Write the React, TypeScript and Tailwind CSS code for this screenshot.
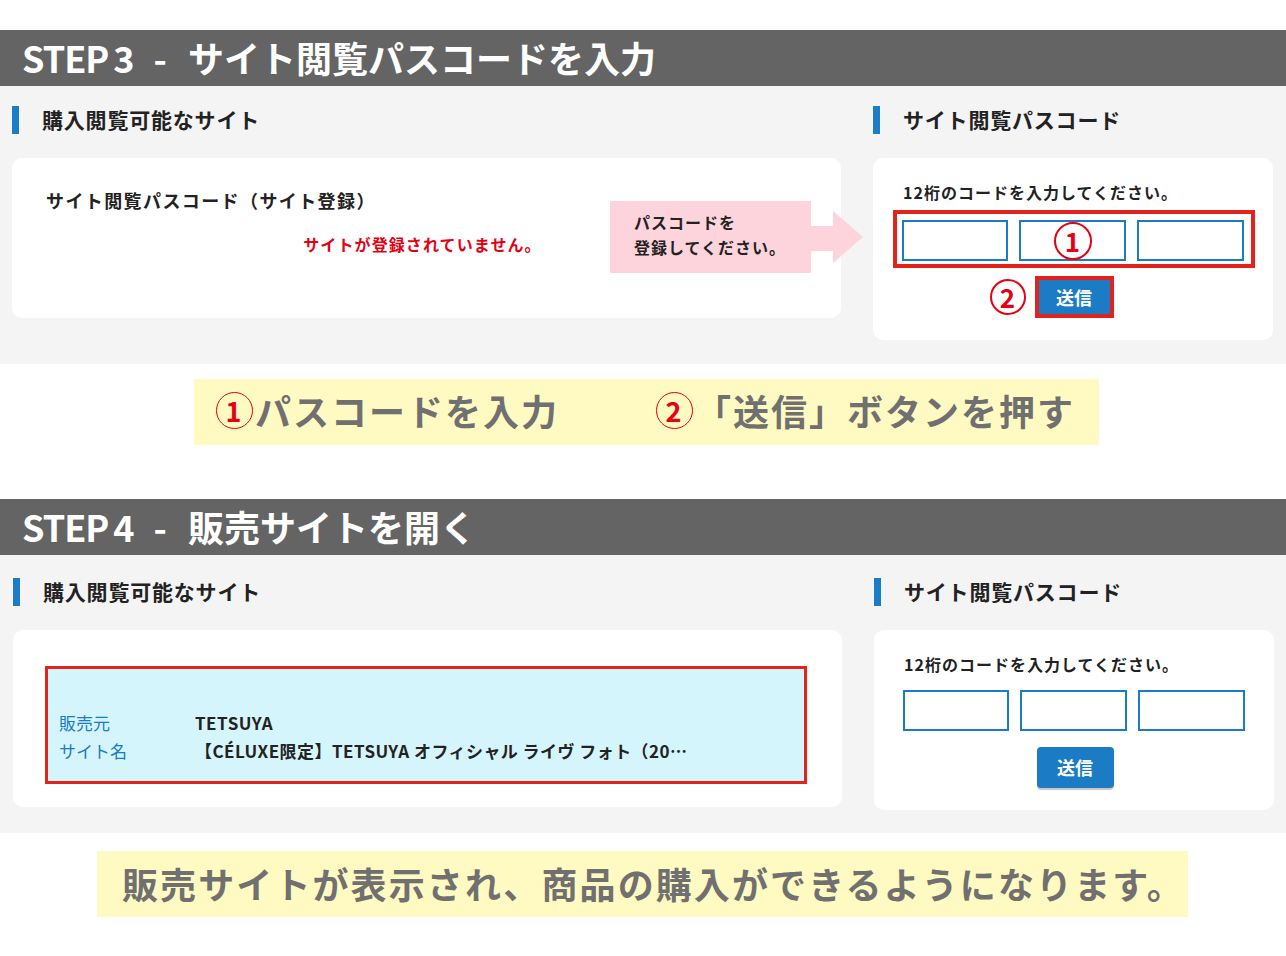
import React from "react";

const FONT = { fontFamily: '"Noto Sans CJK JP", "Noto Sans", sans-serif' };

function StepHeader({ num, title }: { num: string; title: string }) {
  return (
    <div className="flex h-[56px] items-center whitespace-nowrap bg-[#646464] pb-[2px] pl-[22px] text-[36px] font-bold leading-none text-white">
      <span className="tracking-[-1px]">STEP</span>
      <span className="ml-[5px]">{num}</span>
      <span className="ml-[19px]">-</span>
      <span className="ml-[21px]">{title}</span>
    </div>
  );
}

function SectionTitle({ children }: { children: React.ReactNode }) {
  return (
    <div className="flex h-[28px] items-center">
      <div className="h-[28px] w-[7px] bg-[#1b7cc8]" />
      <span className="ml-[23px] text-[21px] font-bold tracking-[0.8px] text-[#222]">
        {children}
      </span>
    </div>
  );
}

function CodeCard({ marked }: { marked: boolean }) {
  return (
    <div className="flex flex-col rounded-[10px] bg-white pb-[22px] pl-[20px] pr-[18px] pt-[24px]">
      <p className="pl-[10px] text-[16px] font-bold leading-[20px] tracking-[1px] text-[#222]">
        12桁のコードを入力してください。
      </p>
      <div
        className={
          marked
            ? "relative mt-[8px] flex gap-[11px] border-4 border-[#e3211d] px-[5px] pb-[3px] pt-[6px]"
            : "relative mt-[6px] flex gap-[11px] border-4 border-transparent px-[5px] pb-[3px] pt-[6px]"
        }
      >
        <div className="h-[41px] w-[106px] border-2 border-[#1b7bc8] bg-white" />
        <div className="relative h-[41px] w-[107px] border-2 border-[#1b7bc8] bg-white">
          {marked && (
            <span className="absolute left-1/2 top-1/2 flex h-[38px] w-[38px] -translate-x-1/2 -translate-y-1/2 items-center justify-center rounded-full border-2 border-[#e60012] bg-white text-[26px] font-bold leading-none text-[#e60012]">
              1
            </span>
          )}
        </div>
        <div className="h-[41px] w-[107px] border-2 border-[#1b7bc8] bg-white" />
      </div>
      <div className={marked ? "mt-[8px] flex justify-center" : "mt-[9px] flex justify-center"}>
        <div className="relative">
          {marked && (
            <span className="absolute right-full top-1/2 mr-[9px] flex h-[36px] w-[36px] -translate-y-1/2 items-center justify-center rounded-full border-2 border-[#e60012] bg-white text-[26px] font-bold leading-none text-[#e60012]">
              2
            </span>
          )}
          <button
            className={
              marked
                ? "flex h-[42px] w-[79px] items-center justify-center border-4 border-[#e3211d] bg-[#1b7bc4] text-[18px] font-bold text-white"
                : "flex h-[41px] w-[77px] items-center justify-center rounded-[4px] bg-[#1b7bc4] text-[18px] font-bold text-white shadow-[0_2px_1px_rgba(0,0,0,0.22)]"
            }
          >
            送信
          </button>
        </div>
      </div>
    </div>
  );
}

function Step3Left() {
  return (
    <div className="relative h-[160px] rounded-[10px] bg-white pl-[34px] pr-[42px] pt-[30px]">
      <p className="text-[18px] font-bold leading-[24px] tracking-[1.4px] text-[#222]">
        サイト閲覧パスコード（サイト登録）
      </p>
      <p className="mt-[20px] text-center text-[16px] font-bold leading-[24px] tracking-[1.1px] text-[#e60012]">
        サイトが登録されていません。
      </p>
      <div className="absolute left-[598px] top-[43px] flex items-center">
        <div className="flex h-[72px] w-[201px] flex-col justify-center bg-[#fdd3dc] pb-[4px] pl-[24px] text-[16px] font-bold leading-[25px] tracking-[1px] text-[#222]">
          <span>パスコードを</span>
          <span>登録してください。</span>
        </div>
        <svg width="52" height="52" viewBox="0 0 52 52">
          <polygon points="0,15 22,15 22,0 52,26 22,52 22,40 0,40" fill="#fdd3dc" />
        </svg>
      </div>
    </div>
  );
}

function Step4Left() {
  return (
    <div className="h-[177px] rounded-[10px] bg-white pl-[32px] pr-[35px] pt-[36px]">
      <div className="h-[118px] border-[3px] border-[#e3211d] bg-[#d5f5fd] pb-[15px] pl-[11px] pt-[40px] text-[17px] leading-[28px]">
        <div className="flex">
          <span className="w-[136px] text-[#1b7bc4]">販売元</span>
          <span className="font-bold tracking-[0.5px] text-[#222]">TETSUYA</span>
        </div>
        <div className="flex">
          <span className="w-[136px] text-[#1b7bc4]">サイト名</span>
          <span className="font-bold tracking-[0.45px] text-[#222]">
            【CÉLUXE限定】TETSUYA オフィシャル ライヴ フォト（20…
          </span>
        </div>
      </div>
    </div>
  );
}

function StepBody({
  step,
  left,
  marked,
}: {
  step: 3 | 4;
  left: React.ReactNode;
  marked: boolean;
}) {
  return (
    <div
      className={
        step === 3
          ? "grid h-[278px] grid-cols-[829px_400px] gap-x-[32px] bg-[#f4f4f4] pl-[12px] pt-[20px]"
          : "grid h-[278px] grid-cols-[829px_400px] gap-x-[32px] bg-[#f4f4f4] pl-[13px] pt-[23px]"
      }
    >
      <div className="flex flex-col gap-[24px]">
        <SectionTitle>購入閲覧可能なサイト</SectionTitle>
        {left}
      </div>
      <div className="flex flex-col gap-[24px]">
        <SectionTitle>サイト閲覧パスコード</SectionTitle>
        <CodeCard marked={marked} />
      </div>
    </div>
  );
}

function BigCircled({ n }: { n: string }) {
  return (
    <span className="flex h-[37px] w-[37px] items-center justify-center rounded-full border-[1.5px] border-[#e60012] text-[27px] font-bold leading-none text-[#e60012]">
      {n}
    </span>
  );
}

export default function App() {
  return (
    <div className="h-[956px] w-[1286px] overflow-hidden bg-white pt-[30px]" style={FONT}>
      <StepHeader num="3" title="サイト閲覧パスコードを入力" />
      <StepBody step={3} left={<Step3Left />} marked />

      <div className="ml-[194px] mt-[15px] flex h-[66px] w-[905px] items-center whitespace-nowrap bg-[#fff9c2] pb-[4px] pl-[22px] text-[36px] font-bold leading-none tracking-[2px] text-[#707070]">
        <BigCircled n="1" />
        <span className="ml-[2px]">パスコードを入力</span>
        <span className="ml-[97px]">
          <BigCircled n="2" />
        </span>
        <span className="ml-[2px]">「送信」ボタンを押す</span>
      </div>

      <div className="mt-[54px]">
        <StepHeader num="4" title="販売サイトを開く" />
      </div>
      <StepBody step={4} left={<Step4Left />} marked={false} />

      <div className="ml-[97px] mt-[18px] flex h-[66px] w-[1091px] items-center whitespace-nowrap bg-[#fff9c2] pb-[3px] pl-[25px] text-[36px] font-bold leading-none tracking-[2.1px] text-[#707070]">
        販売サイトが表示され、商品の購入ができるようになります。
      </div>
    </div>
  );
}
